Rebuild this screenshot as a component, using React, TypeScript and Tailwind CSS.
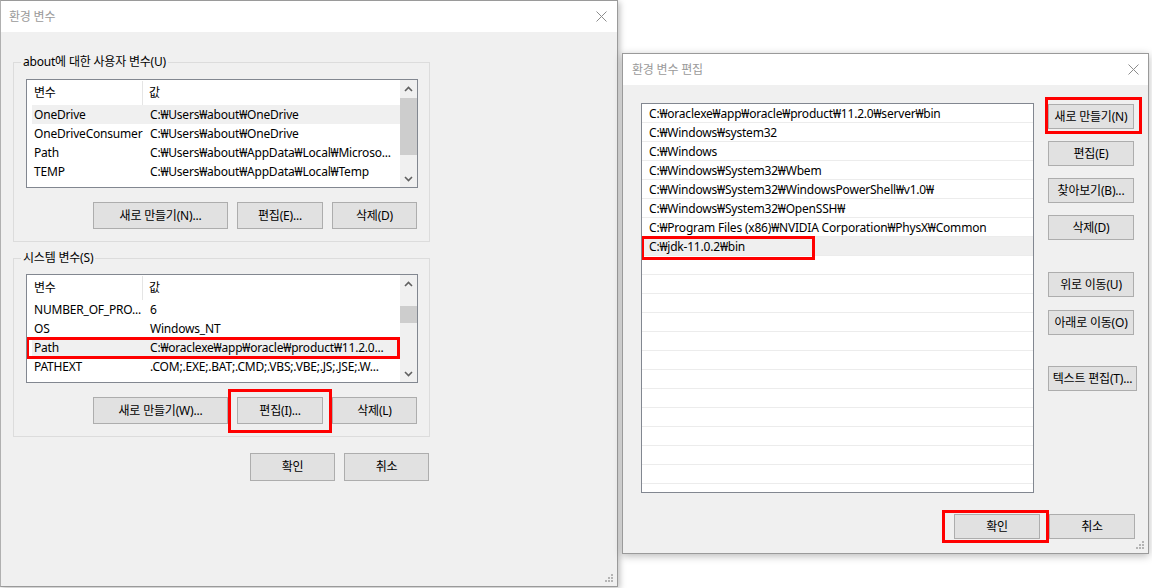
import React from 'react';

const W = '\u20A9';

type BtnProps = { label: string; className?: string; children?: React.ReactNode };

function Btn({ label, className = '', children }: BtnProps) {
  return (
    <div
      className={`relative flex shrink-0 items-center justify-center whitespace-nowrap border border-[#adadad] bg-[#e1e1e1] text-black ${className}`}
    >
      {label}
      {children}
    </div>
  );
}

function CloseX() {
  return (
    <svg width="11" height="11" viewBox="0 0 11 11" className="shrink-0">
      <path d="M0.5 0.5 L10.5 10.5 M10.5 0.5 L0.5 10.5" stroke="#8c8c8c" strokeWidth="1" fill="none" />
    </svg>
  );
}

function Grip() {
  return (
    <svg width="8" height="8" viewBox="0 0 8 8" className="absolute bottom-[4px] right-[4px]">
      <rect x="6" y="0" width="2" height="2" fill="#b4b4b4" />
      <rect x="3" y="3" width="2" height="2" fill="#b4b4b4" />
      <rect x="6" y="3" width="2" height="2" fill="#b4b4b4" />
      <rect x="0" y="6" width="2" height="2" fill="#b4b4b4" />
      <rect x="3" y="6" width="2" height="2" fill="#b4b4b4" />
      <rect x="6" y="6" width="2" height="2" fill="#b4b4b4" />
    </svg>
  );
}

function Chevron({ down = false }: { down?: boolean }) {
  return (
    <svg width="9" height="6" viewBox="0 0 9 6">
      <path
        d={down ? 'M1 1 L4.5 4.5 L8 1' : 'M1 5 L4.5 1.5 L8 5'}
        stroke="#606060"
        strokeWidth="1.6"
        fill="none"
      />
    </svg>
  );
}

type Row = { name: string; value: string; selected?: boolean; red?: boolean };

function VarList({ rows, thumbOffset, thumbHeight }: { rows: Row[]; thumbOffset: string; thumbHeight: string }) {
  return (
    <div className="flex h-[109px] w-[392px] border border-[#828790] bg-white">
      <div className="relative flex min-w-0 flex-1 flex-col overflow-hidden pl-[5px]">
        <div className="flex h-[25px] shrink-0 items-center pt-[1px]">
          <div className="flex h-full w-[111px] shrink-0 items-center border-r border-[#e5e5e5] pl-[2px]">변수</div>
          <div className="pl-[6px]">값</div>
        </div>
        {rows.map((r) => (
          <div
            key={r.name}
            className={`relative flex h-[19px] shrink-0 items-center whitespace-nowrap ${r.selected ? 'bg-[#f0f0f0]' : ''}`}
          >
            <div className="w-[111px] shrink-0 pl-[2px]">{r.name}</div>
            <div className="min-w-0 flex-1 overflow-hidden pl-[7px]">{r.value}</div>
            {r.red && (
              <div className="absolute -left-[6px] -top-[1px] h-[22px] w-[374px] border-[3px] border-[#ff0000]" />
            )}
          </div>
        ))}
      </div>
      <div className="flex w-[17px] shrink-0 flex-col bg-[#f0f0f0]">
        <div className="flex h-[17px] shrink-0 items-center justify-center">
          <Chevron />
        </div>
        <div className="flex flex-1 flex-col">
          <div className={`shrink-0 ${thumbOffset}`} />
          <div className={`shrink-0 bg-[#cdcdcd] ${thumbHeight}`} />
        </div>
        <div className="flex h-[17px] shrink-0 items-center justify-center">
          <Chevron down />
        </div>
      </div>
    </div>
  );
}

const userRows: Row[] = [
  { name: 'OneDrive', value: `C:${W}Users${W}about${W}OneDrive`, selected: true },
  { name: 'OneDriveConsumer', value: `C:${W}Users${W}about${W}OneDrive` },
  { name: 'Path', value: `C:${W}Users${W}about${W}AppData${W}Local${W}Microso...` },
  { name: 'TEMP', value: `C:${W}Users${W}about${W}AppData${W}Local${W}Temp` },
];

const sysRows: Row[] = [
  { name: 'NUMBER_OF_PRO...', value: '6' },
  { name: 'OS', value: 'Windows_NT' },
  { name: 'Path', value: `C:${W}oraclexe${W}app${W}oracle${W}product${W}11.2.0...`, selected: true, red: true },
  { name: 'PATHEXT', value: '.COM;.EXE;.BAT;.CMD;.VBS;.VBE;.JS;.JSE;.W...' },
];

const paths = [
  `C:${W}oraclexe${W}app${W}oracle${W}product${W}11.2.0${W}server${W}bin`,
  `C:${W}Windows${W}system32`,
  `C:${W}Windows`,
  `C:${W}Windows${W}System32${W}Wbem`,
  `C:${W}Windows${W}System32${W}WindowsPowerShell${W}v1.0${W}`,
  `C:${W}Windows${W}System32${W}OpenSSH${W}`,
  `C:${W}Program Files (x86)${W}NVIDIA Corporation${W}PhysX${W}Common`,
  `C:${W}jdk-11.0.2${W}bin`,
  '', '', '', '', '', '', '', '', '', '', '', '',
];

function GroupLabel({ text }: { text: string }) {
  return (
    <span className="absolute -top-[10px] left-[7px] bg-[#f0f0f0] px-[2px] leading-[18px]">{text}</span>
  );
}

export default function App() {
  return (
    <div className="relative h-[588px] w-[1152px] overflow-hidden bg-white font-['Noto_Sans','Noto_Sans_CJK_KR',sans-serif] text-[12px] leading-[16px] tracking-[-0.2px] text-black">
      {/* 환경 변수 */}
      <div className="absolute left-0 top-0 flex h-[587px] w-[618px] flex-col border border-l-[#b0b0b0] border-[#9a9a9a] border-l-dashed bg-[#f0f0f0] shadow-[2px_2px_6px_rgba(0,0,0,0.25)]">
        <div className="flex h-[31px] shrink-0 items-center justify-between bg-white pl-[8px] pr-[10px]">
          <span className="text-[#9a9a9a]">환경 변수</span>
          <CloseX />
        </div>
        <div className="flex flex-1 flex-col pl-[12px] pt-[30px]">
          <div className="relative h-[180px] w-[417px] border border-[#dcdcdc] pl-[12px] pt-[16px]">
            <GroupLabel text="about에 대한 사용자 변수(U)" />
            <VarList rows={userRows} thumbOffset="h-[1px]" thumbHeight="h-[57px]" />
            <div className="mt-[14px] flex w-[391px] justify-end gap-[9px]">
              <Btn label="새로 만들기(N)..." className="h-[27px] w-[135px]" />
              <Btn label="편집(E)..." className="h-[27px] w-[86px]" />
              <Btn label="삭제(D)" className="h-[27px] w-[85px]" />
            </div>
          </div>
          <div className="relative mt-[16px] h-[179px] w-[417px] border border-[#dcdcdc] pl-[12px] pt-[15px]">
            <GroupLabel text="시스템 변수(S)" />
            <VarList rows={sysRows} thumbOffset="h-[14px]" thumbHeight="h-[17px]" />
            <div className="mt-[14px] flex w-[391px] justify-end gap-[9px]">
              <Btn label="새로 만들기(W)..." className="h-[27px] w-[135px]" />
              <Btn label="편집(I)..." className="h-[27px] w-[86px]">
                <div className="absolute -left-[10px] -top-[9px] h-[44px] w-[104px] border-[3px] border-[#ff0000]" />
              </Btn>
              <Btn label="삭제(L)" className="h-[27px] w-[85px]" />
            </div>
          </div>
          <div className="mt-[16px] flex w-[417px] justify-end gap-[9px] pr-[1px]">
            <Btn label="확인" className="h-[28px] w-[85px]" />
            <Btn label="취소" className="h-[28px] w-[85px]" />
          </div>
        </div>
        <Grip />
      </div>

      {/* 환경 변수 편집 */}
      <div className="absolute left-[622px] top-[53px] flex h-[501px] w-[527px] flex-col border border-[#9a9a9a] bg-[#f0f0f0] shadow-[0_2px_8px_rgba(0,0,0,0.28)]">
        <div className="flex h-[31px] shrink-0 items-center justify-between bg-white pl-[9px] pr-[9px]">
          <span className="text-[#9a9a9a]">환경 변수 편집</span>
          <CloseX />
        </div>
        <div className="flex flex-1 flex-col pl-[18px] pt-[18px]">
          <div className="flex">
            <div className="h-[390px] w-[393px] overflow-hidden border border-[#828790] bg-white">
              {paths.map((p, i) => (
                <div
                  key={i}
                  className={`relative flex h-[19px] items-center whitespace-nowrap border-b border-[#ececec] pl-[7px] pt-[2px] ${i === 7 ? 'bg-[#efefef]' : ''}`}
                >
                  {p}
                  {i === 7 && (
                    <div className="absolute -left-[1px] -top-[1px] h-[24px] w-[174px] border-[3px] border-[#ff0000]" />
                  )}
                </div>
              ))}
            </div>
            <div className="ml-[14px] flex flex-col">
              <Btn label="새로 만들기(N)" className="mt-[1px] h-[25px] w-[86px]">
                <div className="absolute -left-[4px] -top-[8px] h-[37px] w-[97px] border-[3px] border-[#ff0000]" />
              </Btn>
              <Btn label="편집(E)" className="mt-[12px] h-[25px] w-[86px]" />
              <Btn label="찾아보기(B)..." className="mt-[12px] h-[25px] w-[86px]" />
              <Btn label="삭제(D)" className="mt-[12px] h-[25px] w-[86px]" />
              <Btn label="위로 이동(U)" className="mt-[32px] h-[25px] w-[86px]" />
              <Btn label="아래로 이동(O)" className="mt-[13px] h-[25px] w-[86px]" />
              <Btn label="텍스트 편집(T)..." className="mt-[31px] h-[25px] w-[89px]" />
            </div>
          </div>
          <div className="mt-[21px] flex justify-end gap-[9px] pr-[13px]">
            <Btn label="확인" className="h-[25px] w-[86px]">
              <div className="absolute -left-[13px] -top-[5px] h-[33px] w-[107px] border-[3px] border-[#ff0000]" />
            </Btn>
            <Btn label="취소" className="h-[25px] w-[86px]" />
          </div>
        </div>
        <Grip />
      </div>
    </div>
  );
}
